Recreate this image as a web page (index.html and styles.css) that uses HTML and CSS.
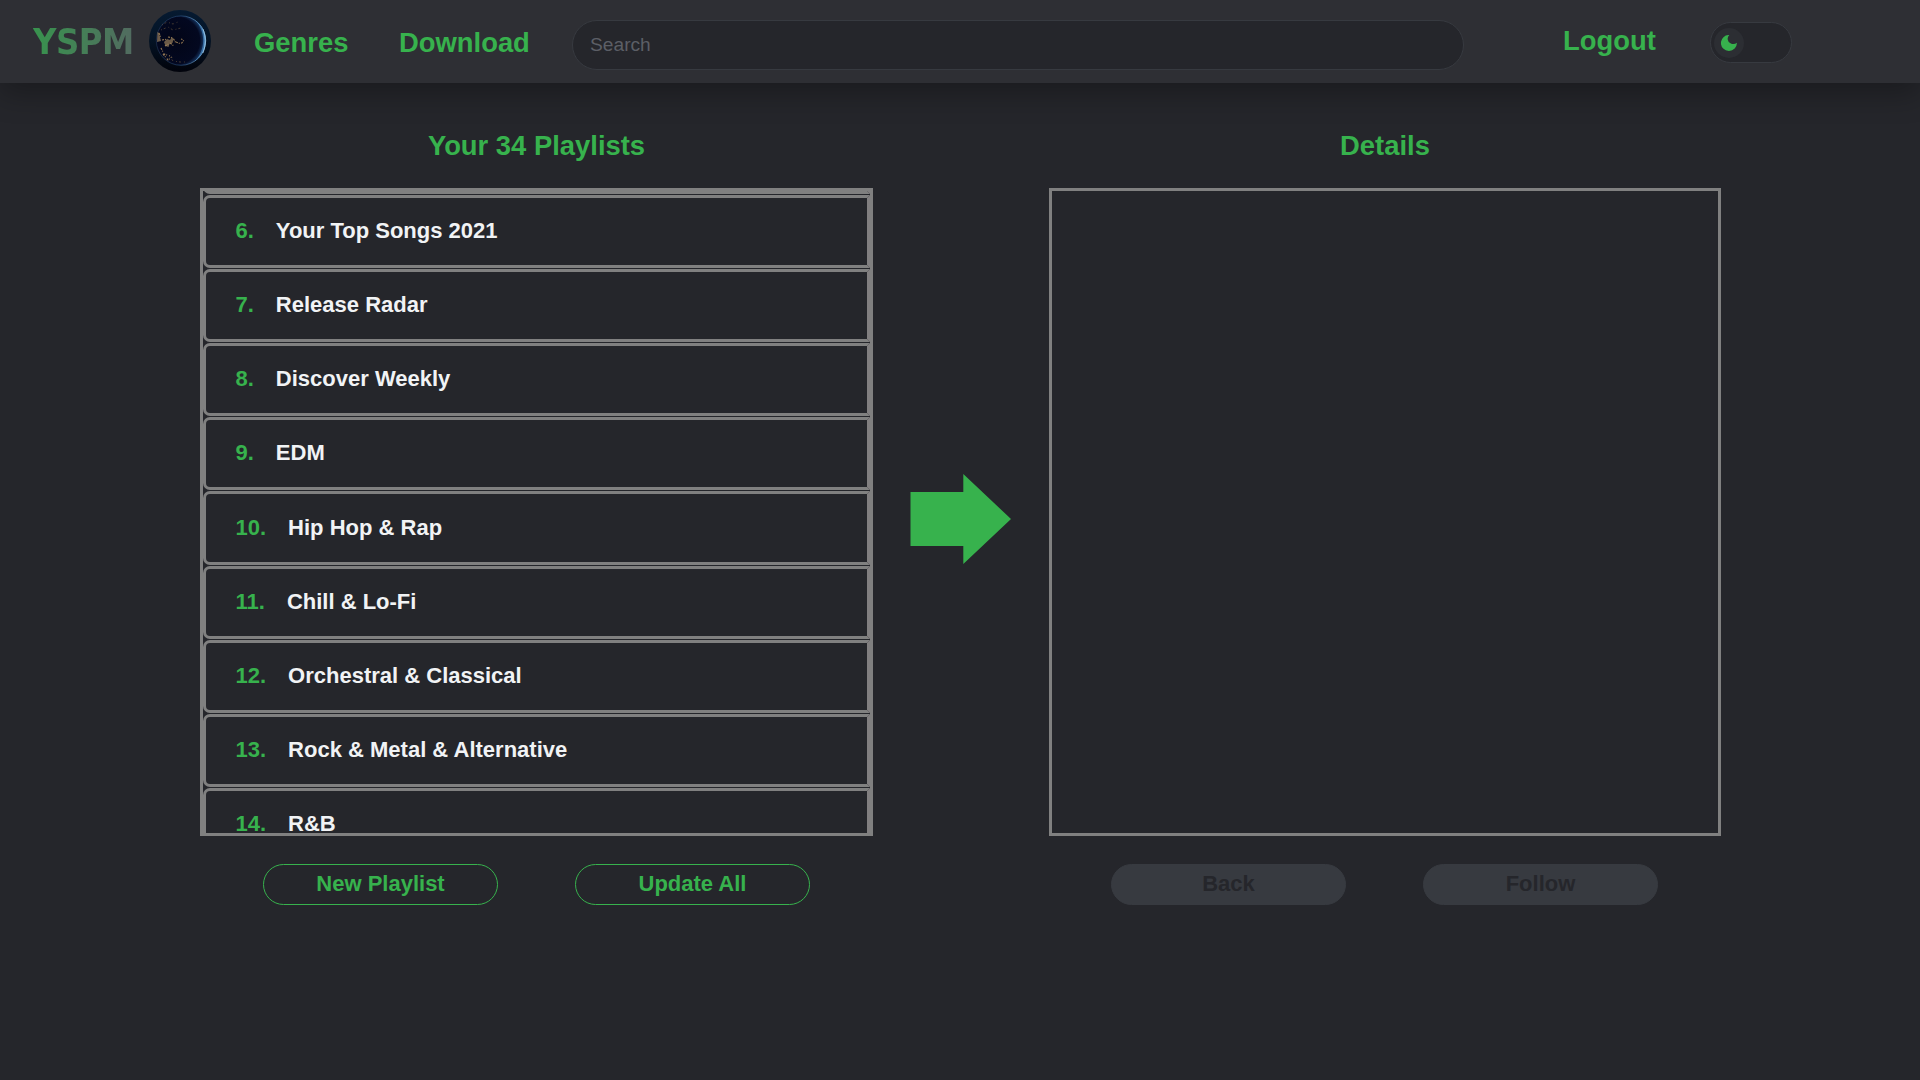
FILE: index.html
```html
<!DOCTYPE html>
<html lang="en">
<head>
<meta charset="utf-8">
<title>YSPM</title>
<link rel="stylesheet" href="styles.css">
</head>
<body>
<header class="header">
  <span class="brand">YSPM</span>
  <svg class="globe" viewBox="0 0 62 62" width="62" height="62">
    <defs>
      <linearGradient id="space" x1="0" y1="0" x2="0" y2="1"><stop offset="0" stop-color="#061a31"/><stop offset=".45" stop-color="#041426"/><stop offset="1" stop-color="#01030b"/></linearGradient>
      <linearGradient id="rim" x1="0" y1="0" x2="1" y2="0"><stop offset="0" stop-color="#26395d" stop-opacity=".7"/><stop offset=".5" stop-color="#2d5688" stop-opacity=".7"/><stop offset="1" stop-color="#8fc7f2"/></linearGradient>
      <radialGradient id="night" cx=".4" cy=".5" r=".6"><stop offset="0" stop-color="#020517"/><stop offset=".8" stop-color="#030820"/><stop offset="1" stop-color="#1d4678"/></radialGradient>
    </defs>
    <circle cx="31" cy="31" r="31" fill="url(#space)"/>
    <circle cx="32" cy="30.6" r="24.6" fill="url(#night)"/>
    <circle cx="32" cy="30.6" r="24.7" fill="none" stroke="url(#rim)" stroke-width=".8"/>
    <path d="M46 10C60 21 60 41 46 51C57 40 57 21 46 10Z" fill="#4f94d0" opacity=".6"/>
    <path d="M54 19Q58.500 31 54 43" fill="none" stroke="#a9d5f3" stroke-width="1" opacity=".7"/>
    <path d="M13 15l5-3 6 2 5-2M12 20l7-3 5 3 8-2M21 47l3 4 7 1 6 0" fill="none" stroke="#76613f" stroke-width="1" stroke-dasharray="1 2 2 3" opacity=".55"/>
    <path d="M8.500 22l1.500 1 1 4 1 4-4 1zM15 32l3-3 3 1 2-3 1.500 2-1 4-3 1-1 3-3-1z" fill="#b39467" opacity=".6"/>
    <path d="M10 23l2 5M13 30l6-1M19 27l5 1 3 5M16 36l5-3 4 3M27 32l5 2 3-4-3-1M12 38l3 6 6 2M14 44l5 6 4-3" fill="none" stroke="#a98a5c" stroke-width="1.200" stroke-dasharray="2 1 1 2" opacity=".85"/>
  </svg>
  <a class="nav nav-genres">Genres</a>
  <a class="nav nav-download">Download</a>
  <input class="search" type="text" placeholder="Search">
  <a class="nav nav-logout">Logout</a>
  <div class="toggle"><div class="knob">
    <svg viewBox="0 0 16 16" width="16" height="16"><path d="M8.300 0A5 5 0 0 0 9.500 8.200A5.500 5.500 0 0 0 15.900 7.700A8 8 0 1 1 8.300 0Z" fill="#37b24d"/></svg>
  </div></div>
</header>
<main class="main">
  <section class="panel">
    <h2 class="title">Your 34 Playlists</h2>
    <div class="box">
      <div class="list">
        <div class="row"></div>
        <div class="row"><span class="num">6.</span>Your Top Songs 2021</div>
        <div class="row"><span class="num">7.</span>Release Radar</div>
        <div class="row"><span class="num">8.</span>Discover Weekly</div>
        <div class="row"><span class="num">9.</span>EDM</div>
        <div class="row"><span class="num">10.</span>Hip Hop &amp; Rap</div>
        <div class="row"><span class="num">11.</span>Chill &amp; Lo-Fi</div>
        <div class="row"><span class="num">12.</span>Orchestral &amp; Classical</div>
        <div class="row"><span class="num">13.</span>Rock &amp; Metal &amp; Alternative</div>
        <div class="row"><span class="num">14.</span>R&amp;B</div>
      </div>
    </div>
    <div class="actions">
      <button class="btn">New Playlist</button>
      <button class="btn">Update All</button>
    </div>
  </section>
  <svg class="arrow" viewBox="0 0 101 90" width="101" height="90"><path d="M.5 18H53.3V0L101 45L53.3 90V72H.5Z" fill="#37b24d"/></svg>
  <section class="panel panel-details">
    <h2 class="title">Details</h2>
    <div class="box"></div>
    <div class="actions">
      <button class="btn btn-off" disabled>Back</button>
      <button class="btn btn-off" disabled>Follow</button>
    </div>
  </section>
</main>
</body>
</html>
```
FILE: styles.css
```css
* { box-sizing: border-box; }
body {
  margin: 0;
  height: 1080px;
  overflow: hidden;
  background: #25262b;
  color: #f1f3f5;
  font-family: "Liberation Sans", Arial, sans-serif;
}
.header {
  display: flex;
  align-items: flex-start;
  height: 83px;
  padding-left: 33px;
  background: #2e2f34;
  box-shadow: 0 10px 30px rgba(0, 0, 0, .3);
}
.brand {
  width: 116px;
  padding-top: 17px;
  font: 700 36px/50px "DejaVu Sans Condensed", "DejaVu Sans", sans-serif;
  font-stretch: semi-condensed;
  letter-spacing: -0.5px;
  background: linear-gradient(90deg, #38934e, #526a60 88%);
  -webkit-background-clip: text;
  background-clip: text;
  color: transparent;
}
.globe { flex: none; margin-top: 10px; }
.nav {
  flex: none;
  color: #37b24d;
  font-size: 27.4px;
  font-weight: 700;
  line-height: 32px;
  margin-top: 27px;
}
.nav-genres { width: 145px; margin-left: 43px; }
.nav-download { width: 173px; }
.nav-logout { width: 147px; margin: 25px 0 0 99px; }
.search {
  flex: none;
  width: 892px;
  height: 50px;
  margin-top: 20px;
  padding: 0 17px 1px;
  border: 1px solid #373a40;
  border-radius: 25px;
  background: #25262b;
  color: #c1c2c5;
  font: 19.2px "Liberation Sans", Arial, sans-serif;
}
.search::placeholder { color: #5c5f66; opacity: 1; }
.toggle {
  flex: none;
  width: 82px;
  height: 41px;
  margin-top: 22px;
  padding: 5px 3px;
  border: 1px solid #373a40;
  border-radius: 21px;
  background: #25262b;
}
.knob {
  display: flex;
  align-items: center;
  justify-content: center;
  width: 30px;
  height: 30px;
  border-radius: 50%;
  background: #2c2e33;
}
.main {
  display: flex;
  align-items: flex-start;
  padding: 45px 0 0 200px;
}
.panel { width: 673px; }
.panel-details { width: 672px; }
.title {
  margin: 0 0 25px;
  line-height: 35px;
  font-size: 27.4px;
  color: #37b24d;
  text-align: center;
}
.box {
  height: 648px;
  border: 3px solid #808080;
  overflow: hidden;
}
.list { margin-top: -70px; }
.row {
  display: flex;
  align-items: center;
  height: 73.1px;
  margin-bottom: 1px;
  padding: 0 0 1px 29.5px;
  border: 3px solid #808080;
  border-right-color: #817f80;
  border-radius: 7px 0 0 7px;
  font-size: 22px;
  font-weight: 700;
}
.num { color: #37b24d; margin-right: 22px; }
.actions {
  display: flex;
  justify-content: center;
  gap: 77px;
  margin-top: 28px;
}
.panel-details .actions { padding-right: 1px; }
.btn {
  width: 235px;
  height: 41px;
  padding: 0 0 1px;
  border: 1px solid #37b24d;
  border-radius: 21px;
  background: transparent;
  color: #37b24d;
  font: 700 22px "Liberation Sans", Arial, sans-serif;
}
.btn-off { border-color: #373a40; background: #373a40; color: #25262b; }
.arrow { flex: none; margin: 346px 38px 0 37px; }
```
